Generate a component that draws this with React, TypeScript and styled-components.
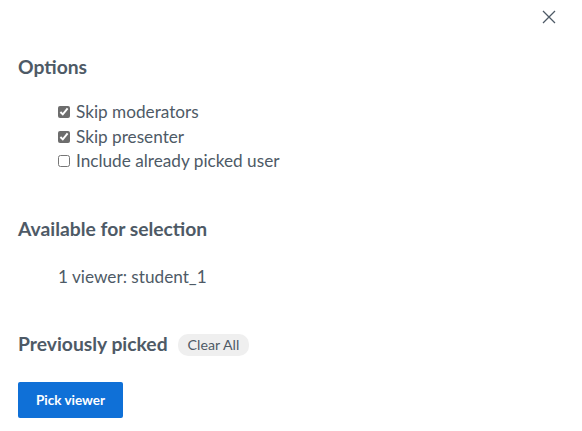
import React from 'react';
import styled, { createGlobalStyle } from 'styled-components';

const GlobalStyle = createGlobalStyle`
  body {
    margin: 0;
    background: #fff;
    font-family: Lato, 'Noto Sans', sans-serif;
    color: #4e5a66;
  }
`;

const Modal = styled.div`
  position: relative;
  width: 582px;
  height: 431px;
  box-sizing: border-box;
  padding: 54px 18px 0;
`;

const CloseButton = styled.button`
  position: absolute;
  top: 10px;
  right: 26px;
  width: 14px;
  height: 14px;
  padding: 0;
  border: 0;
  background: none;
  cursor: pointer;
  svg {
    display: block;
  }
`;

const SectionTitle = styled.h2`
  margin: 0;
  font-size: 19.3px;
  font-weight: 700;
  line-height: 26px;
  display: flex;
  align-items: center;
  gap: 10px;
`;

const OptionList = styled.div`
  display: flex;
  flex-direction: column;
  padding: 20px 0 0 40px;
  margin-bottom: 42px;
`;

const OptionRow = styled.label`
  display: flex;
  align-items: center;
  gap: 6px;
  font-size: 17.2px;
  line-height: 24.5px;
  input {
    margin: 0;
    width: 12px;
    height: 12px;
    accent-color: #6d6d6d;
  }
`;

const ViewerCount = styled.p`
  margin: 0;
  padding: 23px 0 0 40px;
  font-size: 17.2px;
  line-height: 24px;
  margin-bottom: 42px;
`;

const Pill = styled.button`
  border: 0;
  border-radius: 10px;
  background: #efefef;
  color: #4e5a66;
  font-family: inherit;
  font-size: 14.2px;
  height: 22px;
  padding: 0 10px;
  margin-top: 2px;
`;

const PickButton = styled.button`
  margin-top: 25px;
  width: 105px;
  height: 36px;
  border: 0;
  border-radius: 2px;
  background: #0f70d7;
  color: #fff;
  font-family: inherit;
  font-weight: 700;
  font-size: 13.5px;
`;

const options = [
  { label: 'Skip moderators', checked: true },
  { label: 'Skip presenter', checked: true },
  { label: 'Include already picked user', checked: false },
];

export default function App() {
  return (
    <>
      <GlobalStyle />
      <Modal>
        <CloseButton aria-label="Close">
          <svg width="14" height="14" viewBox="0 0 14 14">
            <path d="M1 1L13 13M13 1L1 13" stroke="#4e5a66" strokeWidth="1.3" />
          </svg>
        </CloseButton>
        <SectionTitle>Options</SectionTitle>
        <OptionList>
          {options.map((o) => (
            <OptionRow key={o.label}>
              <input type="checkbox" defaultChecked={o.checked} />
              {o.label}
            </OptionRow>
          ))}
        </OptionList>
        <SectionTitle>Available for selection</SectionTitle>
        <ViewerCount>1 viewer: student_1</ViewerCount>
        <SectionTitle>
          Previously picked
          <Pill>Clear All</Pill>
        </SectionTitle>
        <PickButton>Pick viewer</PickButton>
      </Modal>
    </>
  );
}
